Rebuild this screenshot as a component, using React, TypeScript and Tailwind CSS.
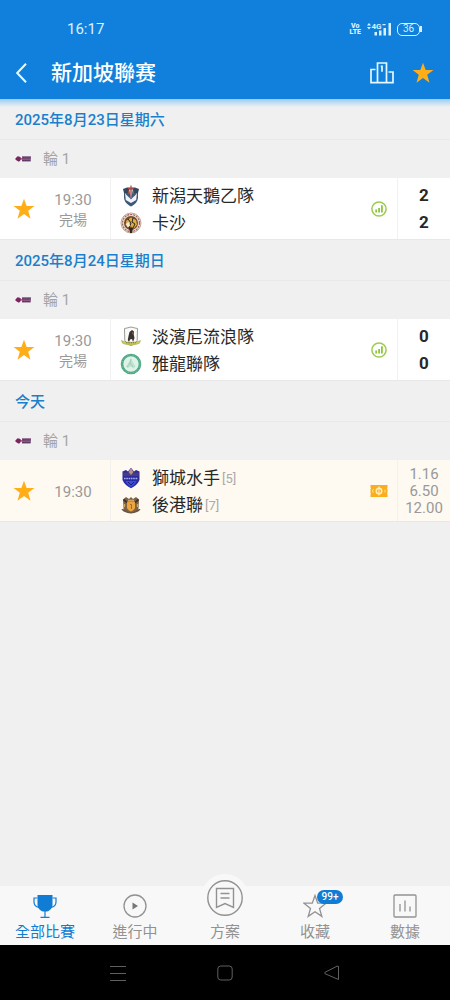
import type { ReactNode } from "react"

type Team = { name: string; rank?: number; crest: ReactNode }

type Match = {
  date: string
  time: string
  status?: string
  teams: [Team, Team]
  scores?: [number, number]
  odds?: string[]
}

function Star({ className }: { className: string }) {
  return (
    <svg viewBox="0 0 24 24" className={className} aria-hidden="true">
      <path d="M12 .7 14.900 8.700h8.500l-6.800 5.300 2.500 8.500L12 17.500l-7.100 5 2.500-8.500L.6 8.700h8.500z" fill="currentColor" />
    </svg>
  )
}

const niigataCrest = (
  <svg viewBox="0 0 22 22" className="size-5.5">
    <path d="M4 4h14v8c0 4.500-3 7.500-7 9.500C7 19.500 4 16.500 4 12z" fill="#3d5878" />
    <path d="M3 4 7 2.500h8L19 4l-1 4H4z" fill="#34465c" />
    <path d="M5 8c1.500 3 4 3.500 6 6.500 2-3 4.500-3.500 6-6.500l-.8 7-5.200 3-5.200-3z" fill="#f1f4f8" />
    <path d="m9 4.500 2 9.500 2-9.500z" fill="#dfe3e8" />
    <path d="M11 .5v12M8 3.500h6M8.500 5.500v3.500M13.500 5.500v3.500" stroke="#a8483f" strokeWidth="1.200" fill="none" />
  </svg>
)

const khalsaCrest = (
  <svg viewBox="0 0 22 22" className="size-5.5">
    <circle cx="11" cy="11" r="10" fill="#e9dfcf" stroke="#c4a79e" />
    <circle cx="11" cy="11" r="8.500" fill="none" stroke="#a5605a" strokeWidth="1.200" strokeDasharray="2 1" />
    <circle cx="11" cy="11" r="7" fill="#74492c" />
    <path d="M6 9 11 5.500l5 2.500 1 4.500-3 4-3-2-4 .5z" fill="#dcae46" />
    <path d="m8 7 3 4-2 5M13 6l-1 4 3 2-2 4" stroke="#2b241f" fill="none" />
    <path d="m5.500 12 3-2 1.500 3.500-2 2z" fill="#f5ebcd" />
    <path d="M9 16h4l-1 5h-2z" fill="#332821" />
  </svg>
)

const tampinesCrest = (
  <svg viewBox="0 0 22 22" className="size-5.5">
    <path d="M4.500 2.500 7 2l4-1 4 1 2.500.5-.3 12c-1.700 3-4 4-6.200 5-2.200-1-4.500-2-6.200-5z" fill="#fafafa" stroke="#9c9a91" />
    <path d="M9.500 6 12 4l2 1.500-.3 3 .8 3.500-1.500 4-1-3-2 .5L9 16l-1.200-2 .7-4z" fill="#38332f" />
    <path d="m12 6 1 1-1 1z" fill="#d5723d" />
    <path d="M1.500 14.500c5 2.500 14 2.500 19 0l-1 2.700c-5 2.300-12 2.300-17 0z" fill="#d2cb52" stroke="#989a48" strokeWidth=".5" />
    <path d="M6 16.800h10" stroke="#69713c" strokeDasharray="1.500 .8" />
  </svg>
)

const geylangCrest = (
  <svg viewBox="0 0 22 22" className="size-5.5">
    <circle cx="11" cy="11" r="9" fill="#dff2e8" stroke="#4aa680" strokeWidth="2.600" />
    <circle cx="11" cy="11" r="9" fill="none" stroke="#8cc9ad" strokeWidth=".8" strokeDasharray="1.500 1.200" />
    <path d="m11 5 1.500 3.500 3 5-2 2-2.500-2-3 1.500-2-1 3-5z" fill="#bfe2d1" />
    <path d="m11 6-1 4 3 4M7 14l3-4" stroke="#8fc4ab" strokeWidth=".7" fill="none" />
  </svg>
)

const lionCrest = (
  <svg viewBox="0 0 22 22" className="size-5.5">
    <path d="M2.500 4.500 6 3l2 1.500 3-3.700 3 3.700L16 3l3.500 1.500V13c-1.500 4-5 6.500-8.500 8.200C7.500 19.500 4 17 2.500 13z" fill="#2b2aa0" />
    <path d="M3 5.500h16l-.5 3.500h-15z" fill="#4a3d79" />
    <path d="m8.500 5 2.500-4 2.500 4-2.500 3z" fill="#bd8f8a" />
    <path d="M4 11.500h14" stroke="#a9b0ee" strokeWidth="1.400" strokeDasharray="1.600 .7" />
    <path d="M5.500 14h11c-1 2.500-3 4.500-5.500 6-2.500-1.500-4.500-3.500-5.500-6z" fill="#3451d8" />
    <path d="m8 15 3 3 3-3" stroke="#1d1b78" fill="none" />
  </svg>
)

const hougangCrest = (
  <svg viewBox="0 0 22 22" className="size-5.5">
    <path d="M3 5.500 6 3l3 2 2-2 2 2 3-2 3 2.500-.5 9C18 17 15 18.500 11 19c-4-.5-7-2-7.500-4.500z" fill="#7d6244" />
    <path d="M7 7.500h8V14c-1 2-2.500 2.700-4 3.500-1.500-.8-3-1.500-4-3.500z" fill="#eda63f" />
    <path d="m3.500 5.500 3.500 3M18.500 5.500 15 8.500" stroke="#3b3631" strokeWidth="1.700" />
    <path d="M8 6.500h6M4.500 10v3M17.500 10v3" stroke="#d9a45d" strokeWidth="1.300" />
    <path d="M10 10.500h1.500V15" stroke="#a5682d" fill="none" />
    <path d="M1.500 15c2-.6 4.500 1.500 6.500 3h6c2-1.500 4.500-3.600 6.500-3-1 2.500-5 4.200-9.500 4.400-4.500-.2-8.500-1.900-9.500-4.400z" fill="#66563f" />
  </svg>
)

const matches: Match[] = [
  {
    date: "2025年8月23日星期六",
    time: "19:30",
    status: "完場",
    teams: [
      { name: "新潟天鵝乙隊", crest: niigataCrest },
      { name: "卡沙", crest: khalsaCrest },
    ],
    scores: [2, 2],
  },
  {
    date: "2025年8月24日星期日",
    time: "19:30",
    status: "完場",
    teams: [
      { name: "淡濱尼流浪隊", crest: tampinesCrest },
      { name: "雅龍聯隊", crest: geylangCrest },
    ],
    scores: [0, 0],
  },
  {
    date: "今天",
    time: "19:30",
    teams: [
      { name: "獅城水手", rank: 5, crest: lionCrest },
      { name: "後港聯", rank: 7, crest: hougangCrest },
    ],
    odds: ["1.16", "6.50", "12.00"],
  },
]

function StatusBar() {
  return (
    <div className="flex h-12 items-center justify-between pt-2.5 pr-7 pl-[67px] text-[#d9f1ff]">
      <span className="text-[15px]">16:17</span>
      <div className="flex items-center gap-1.5">
        <div className="text-center text-[7px] leading-[6px] font-black">
          <div>Vo</div>
          <div>LTE</div>
        </div>
        <svg viewBox="0 0 24 14" className="h-3.5 w-6" fill="currentColor">
          <path d="m0 3.500 2-2.500 2 2.500zM0 5h4L2 7.500z" />
          <text x="4.500" y="7" fontSize="8" fontWeight="700">4G</text>
          <path d="M15.500 2h3v1.200h-3zM7.500 10h2.500v3.500H7.500zM12 8.500h2.500v5H12zM16.500 6H19v7.500h-2.500zM21.500 1H24v12.500h-2.500z" />
        </svg>
        <div className="flex items-center">
          <span className="flex h-[13px] w-[23px] items-center justify-center rounded-[5px] border border-current text-[10px] leading-none">36</span>
          <span className="h-1.5 w-0.5 bg-current" />
        </div>
      </div>
    </div>
  )
}

function LeagueFlag() {
  return (
    <svg viewBox="0 0 16 6" className="h-1.5 w-4" aria-hidden="true">
      <path d="M0 3 2.500.3l2.300.5L7 2.800 5.500 4.300 4 5.700 2 4.800z" fill="#7d2460" />
      <path d="M7 .3h9l-.4 5.200H7z" fill="#7b5580" />
      <path d="M7.500 2h8M7.500 4.300h8" stroke="#4b2955" strokeWidth="1.100" strokeDasharray="1.500 .4" />
      <path d="M5 3.200h10" stroke="#b05c7c" strokeWidth=".8" />
    </svg>
  )
}

function StatsIcon() {
  return (
    <svg viewBox="0 0 16 16" className="size-4" aria-hidden="true">
      <circle cx="8" cy="8" r="7.100" fill="none" stroke="#9ccb50" strokeWidth="1.500" />
      <path d="M4.300 8.500h1.800v3H4.300zM7.200 7h1.800v4.500H7.200zM10 4.300h1.800v7.200H10z" fill="#8cc63a" />
    </svg>
  )
}

function TicketIcon() {
  return (
    <svg viewBox="0 0 18 12" className="h-3 w-[18px]" aria-hidden="true">
      <path d="M.5 0h17v2.500l-.5.8.5.8v4l-.5.8.5.8V12H.5V9.700l.5-.8-.5-.8v-4l.5-.8-.5-.8z" fill="#faad1e" />
      <circle cx="9" cy="6" r="2.700" fill="#f3a010" stroke="#fff0b8" strokeWidth="1.600" />
      <path d="M9 1.500v9" stroke="#fff0b8" strokeWidth="1.200" />
      <path d="M3.500 4 2.500 6l1 2M15 4.500v3" stroke="#fbe08c" fill="none" />
    </svg>
  )
}

function MatchRow({ match }: { match: Match }) {
  const upcoming = !match.scores
  return (
    <div className={`flex h-[62px] items-stretch border-b border-[#e8e8e8] ${upcoming ? "bg-[#fefaf2]" : "bg-white"}`}>
      <button type="button" aria-label="收藏" className="flex w-12 items-center justify-center text-[#ffae18]">
        <Star className="size-[22px]" />
      </button>
      <div className="flex w-[63px] flex-col items-center justify-center border-r border-[#f2f1ef] pt-0.5 pr-3 text-[15px] leading-5 text-[#999]">
        <span>{match.time}</span>
        {match.status && <span className="text-sm leading-5">{match.status}</span>}
      </div>
      <div className="flex min-w-0 flex-1 flex-col justify-center pt-0.5 pl-[9px]">
        {match.teams.map((team) => (
          <div key={team.name} className="flex h-[27px] items-center">
            {team.crest}
            <span className="pt-0.5 pl-2.5 text-[17px] text-[#282828]">{team.name}</span>
            {team.rank && <span className="pt-0.5 pl-0.5 text-[13px] text-[#aaa]">[{team.rank}]</span>}
          </div>
        ))}
      </div>
      <div className="flex w-9 items-center justify-center">
        {upcoming ? <TicketIcon /> : <StatsIcon />}
      </div>
      {match.scores && (
        <div className="flex w-[53px] flex-col items-center justify-center border-l border-[#f2f1ef] text-[17px] leading-[27px] font-bold text-[#282828]">
          <span>{match.scores[0]}</span>
          <span>{match.scores[1]}</span>
        </div>
      )}
      {match.odds && (
        <div className="flex w-[53px] flex-col items-center justify-center border-l border-[#f2f1ef] pt-0.5 text-[15px] leading-[17px] text-[#999]">
          {match.odds.map((odd) => (
            <span key={odd}>{odd}</span>
          ))}
        </div>
      )}
    </div>
  )
}

const navItem = "flex flex-1 flex-col items-center gap-1 pt-2 text-[15px] leading-5"

export default function App() {
  return (
    <div className="flex min-h-screen flex-col bg-[#f0f0f0] font-[Roboto,'Noto_Sans_CJK_TC',sans-serif]">
      <header className="bg-[#1180dc]">
        <StatusBar />
        <div className="flex h-[51px] items-center px-4 pb-0.5 text-[#e4f8ff]">
          <button type="button" aria-label="返回" className="mr-6">
            <svg viewBox="0 0 11 20" className="h-5 w-[11px]" fill="none" stroke="currentColor" strokeWidth="2">
              <path d="M10 .7 1.200 10 10 19.300" />
            </svg>
          </button>
          <h1 className="flex-1 pt-0.5 text-[21px] font-medium text-white">新加坡聯赛</h1>
          <button type="button" aria-label="排名" className="mr-[18px]">
            <svg viewBox="0 0 24 22" className="h-[22px] w-6" fill="none" stroke="currentColor" strokeWidth="1.700">
              <path d="M5.500 7.500H1v13.200h22V10h-4.500M7.500 20.700V1h9v19.700M10.800 4.300H12v5.500" />
            </svg>
          </button>
          <button type="button" aria-label="收藏聯賽" className="text-[#ffae18]">
            <Star className="size-[22px]" />
          </button>
        </div>
      </header>

      <main className="flex-1">
        {matches.map((match, index) => (
          <section key={match.date}>
            <h2
              className={`flex h-[41px] items-center border-b border-[#e9e9e9] pt-[3px] pl-[15px] text-[15px] font-medium text-[#1b7fcb] ${
                index === 0 ? "bg-linear-to-b from-[#9bccf4] to-[#f0f0f0] to-20%" : ""
              }`}
            >
              {match.date}
            </h2>
            <div className="flex h-[38px] items-center gap-3 pl-[15px] text-[15px] text-[#a5a5a5]">
              <LeagueFlag />
              <span>輪 1</span>
            </div>
            <MatchRow match={match} />
          </section>
        ))}
      </main>

      <nav className="flex h-[59px] bg-[#f8f8f8] text-[#929292]">
        <a href="#all" className={`${navItem} text-[#117cd3]`}>
          <svg viewBox="0 0 24 24" className="size-6" fill="none" stroke="currentColor" strokeWidth="1.200">
            <path d="M4.500 1h15v9.500c0 4-3 6.500-5.500 7h-4c-2.500-.5-5.500-3-5.500-7z" fill="currentColor" stroke="none" />
            <path d="M4.500 4H1v4c0 3 2 5 5 5.500M19.500 4H23v4c0 3-2 5-5 5.500M12 17v6M7.500 23.300h9" />
          </svg>
          全部比賽
        </a>
        <a href="#live" className={navItem}>
          <svg viewBox="0 0 24 24" className="size-6" fill="none" stroke="currentColor" strokeWidth="1.300">
            <circle cx="12" cy="12" r="11" />
            <path d="m9.500 8.500 5.500 3.500-5.500 3.500z" fill="#777" stroke="none" />
          </svg>
          進行中
        </a>
        <a href="#plans" className="flex flex-1 flex-col items-center text-[15px] leading-5">
          <span className="-mt-3 flex size-12 items-center justify-center rounded-full bg-[#f8f8f8]">
            <svg viewBox="0 0 36 36" className="size-9" fill="none" stroke="currentColor" strokeWidth="1.400">
              <circle cx="18" cy="18" r="17.200" />
              <path d="M9.500 8.500h17v19L18 23.500l-8.500 4zM13.500 13.500h9M13.500 18h9" />
            </svg>
          </span>
          方案
        </a>
        <a href="#favourites" className={navItem}>
          <span className="relative">
            <svg viewBox="0 0 24 24" className="size-6" fill="none" stroke="currentColor" strokeWidth="1.300">
              <path d="m12 1.500 2.700 7.700H23l-6.500 5.300 2.300 7.900L12 17.700l-6.800 4.700 2.300-7.900L1 9.200h8.300z" />
            </svg>
            <span className="absolute -top-1 left-3.5 flex h-3.5 w-[26px] items-center justify-center rounded-full bg-[#117cd3] text-[10px] leading-none font-medium text-white">
              99+
            </span>
          </span>
          收藏
        </a>
        <a href="#data" className={navItem}>
          <svg viewBox="0 0 24 24" className="size-6" fill="none" stroke="currentColor" strokeWidth="1.300">
            <rect x="1" y="1" width="22" height="22" rx="1" />
            <path d="M7 10v7.500M12 6.500v11M17 12.500v5" />
          </svg>
          數據
        </a>
      </nav>

      <div className="flex h-[55px] items-center justify-around bg-black px-16 text-[#606060]">
        <button type="button" aria-label="選單">
          <svg viewBox="0 0 16 16" className="size-4" stroke="currentColor">
            <path d="M0 1.500h16M0 8.500h16M0 15.500h16" />
          </svg>
        </button>
        <button type="button" aria-label="主畫面">
          <svg viewBox="0 0 16 16" className="size-4" fill="none" stroke="currentColor">
            <rect x=".8" y="1" width="14.400" height="14" rx="3" />
          </svg>
        </button>
        <button type="button" aria-label="返回上一頁">
          <svg viewBox="0 0 16 16" className="size-4" fill="none" stroke="currentColor">
            <path d="M14.500 1.500v13L1 8.700q-1-.7 0-1.400L13 1.200q1.500-.5 1.500.8z" />
          </svg>
        </button>
      </div>
    </div>
  )
}
